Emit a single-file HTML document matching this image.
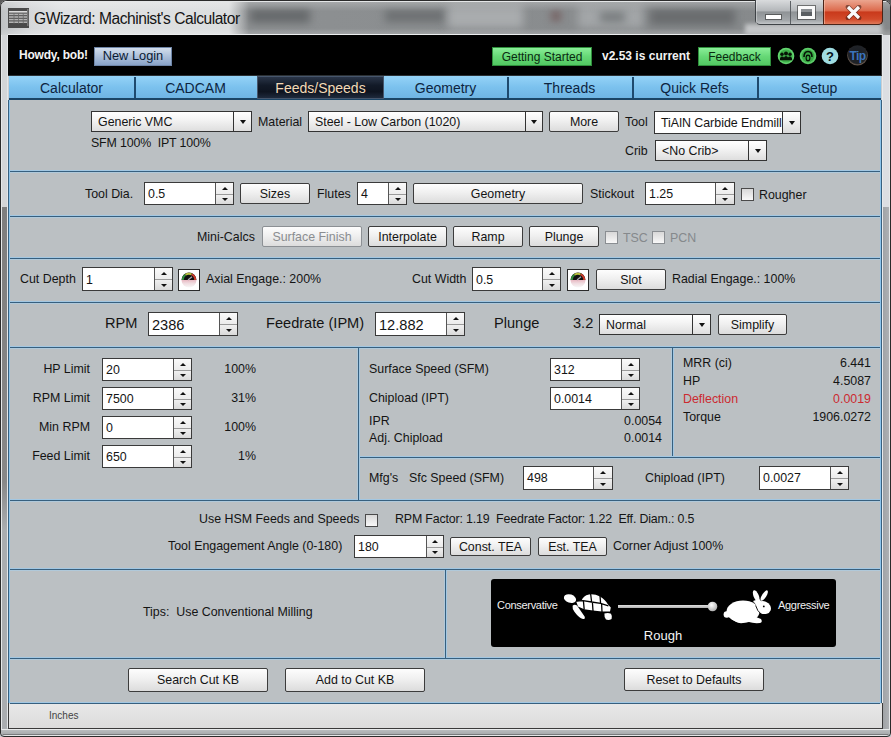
<!DOCTYPE html>
<html><head><meta charset="utf-8"><style>
html,body{margin:0;padding:0;width:891px;height:737px;overflow:hidden;background:#5a5a5a;}
body{position:relative;font-family:"Liberation Sans",sans-serif;}
body>div,body>svg{position:absolute;}
.t{white-space:pre;}
</style></head><body>
<div style="left:0px;top:0px;width:891px;height:737px;background:#c9cdd1;border-radius:7px 7px 0 0;"></div>
<div style="left:0px;top:0px;width:891px;height:737px;box-sizing:border-box;border:1px solid #2a2a2a;border-radius:7px 7px 4px 4px;"></div>
<div style="left:1px;top:1px;width:889px;height:34px;border-radius:6px 6px 0 0;background:#888b8d;overflow:hidden;"></div>
<div style="left:1px;top:1px;width:889px;height:34px;border-radius:6px 6px 0 0;background:linear-gradient(90deg,#bfc2c4 0px,#d6d8da 30px,#e0e2e3 60px,#dcdedf 228px,#8d9092 248px,#85888a 100%);"></div>
<div style="left:250px;top:9px;width:60px;height:14px;background:#66696b;filter:blur(4px);"></div>
<div style="left:385px;top:10px;width:60px;height:12px;background:#6c6f71;filter:blur(4px);"></div>
<div style="left:448px;top:6px;width:75px;height:22px;background:#a9acae;filter:blur(4px);"></div>
<div style="left:552px;top:12px;width:8px;height:8px;background:#6a4a4a;filter:blur(4px);"></div>
<div style="left:578px;top:6px;width:65px;height:22px;background:#a3a6a8;filter:blur(4px);"></div>
<div style="left:600px;top:12px;width:25px;height:10px;background:#767a7c;filter:blur(4px);"></div>
<div style="left:650px;top:9px;width:85px;height:16px;background:#696c6e;filter:blur(4px);"></div>
<div style="left:1px;top:1px;width:889px;height:34px;border-radius:6px 6px 0 0;background:linear-gradient(rgba(255,255,255,0.25),rgba(255,255,255,0) 30%,rgba(255,255,255,0) 80%,rgba(255,255,255,0.2));"></div>
<div style="left:5px;top:1px;width:881px;height:1px;background:#e4e6e7;"></div>
<div style="left:1px;top:35px;width:1px;height:694px;background:#e6e8e9;"></div>
<div style="left:2px;top:35px;width:5px;height:172px;background:#d3d5d7;"></div>
<div style="left:2px;top:207px;width:5px;height:323px;background:linear-gradient(#7e7e7e,#888 85%,#aaadb0);"></div>
<div style="left:2px;top:530px;width:5px;height:199px;background:#aaadb0;"></div>
<div style="left:7px;top:35px;width:1px;height:693px;background:#e4e6e8;"></div>
<div style="left:882px;top:35px;width:1px;height:693px;background:#e8eaec;"></div>
<div style="left:883px;top:35px;width:6px;height:172px;background:#dcdee2;"></div>
<div style="left:883px;top:207px;width:6px;height:522px;background:linear-gradient(90deg,#a0a3a6,#aeb1b4);"></div>
<div style="left:889px;top:35px;width:1px;height:694px;background:#e6e8e9;"></div>
<div style="left:8px;top:34px;width:875px;height:1px;background:#eceeef;"></div>
<svg style="left:8px;top:8px" width="21" height="20" viewBox="0 0 21 20"><rect x="0" y="0" width="21" height="20" fill="#4a4a4a"/><rect x="1" y="3" width="18" height="1.6" fill="#dcdcdc"/><rect x="1" y="5.6" width="18" height="1.6" fill="#b4b4b4"/><rect x="1" y="8.2" width="18" height="1.6" fill="#b4b4b4"/><rect x="1" y="10.8" width="18" height="1.6" fill="#b4b4b4"/><rect x="1" y="13.4" width="18" height="1.6" fill="#b4b4b4"/><rect x="5.6" y="5.6" width="0.8" height="10" fill="#6a6a6a"/><rect x="10.2" y="5.6" width="0.8" height="10" fill="#6a6a6a"/><rect x="14.799999999999999" y="5.6" width="0.8" height="10" fill="#6a6a6a"/><rect x="19" y="1" width="1.5" height="17" fill="#777"/></svg>
<div class="t" style="left:34px;top:11px;font-size:15.6px;line-height:15.6px;color:#141414;font-weight:400;letter-spacing:-0.48px;">GWizard: Machinist's Calculator</div>
<div style="left:745px;top:24px;width:137px;height:11px;background:#c3c5c7;filter:blur(2px);"></div>
<div style="left:755px;top:0px;width:128px;height:25px;box-sizing:border-box;border:1px solid #3e4246;border-top:none;border-radius:0 0 5px 5px;background:linear-gradient(#d9dbdd,#b4b7ba 45%,#8f9396 50%,#a3a7aa 85%,#c2c5c8);"></div>
<div style="left:823px;top:0px;width:60px;height:25px;box-sizing:border-box;border:1px solid #4a2418;border-top:none;border-radius:0 0 5px 0;background:linear-gradient(#eba58f,#dc6a4c 45%,#c9391b 50%,#d24a2a 80%,#e07a5a);"></div>
<div style="left:790px;top:1px;width:1px;height:23px;background:#5d6165;"></div>
<div style="left:756px;top:1px;width:1px;height:23px;background:rgba(255,255,255,0.35);"></div>
<div style="left:824px;top:1px;width:1px;height:23px;background:rgba(255,220,200,0.45);"></div>
<div style="left:766px;top:15px;width:15px;height:4px;background:#fff;box-shadow:0 0 0 1px rgba(40,40,40,0.55);"></div>
<div style="left:798px;top:6px;width:17px;height:13px;box-sizing:border-box;border:3px solid #fafafa;border-top-width:3px;background:#5a5e62;box-shadow:0 0 0 1px rgba(40,40,40,0.55);"></div>
<div style="left:801px;top:9px;width:11px;height:3px;background:#8a8e92;"></div>
<svg style="left:845px;top:5px" width="17" height="15" viewBox="0 0 17 15"><path d="M3 2 L14 13 M14 2 L3 13" stroke="#3a1a12" stroke-width="4.6" fill="none" stroke-linecap="round" opacity="0.55"/><path d="M3 2 L14 13 M14 2 L3 13" stroke="#fafafa" stroke-width="3.2" fill="none" stroke-linecap="butt"/></svg>
<div style="left:8px;top:35px;width:873px;height:41px;background:#000;"></div>
<div style="left:881px;top:35px;width:1px;height:41px;background:#3a3c3e;"></div>
<div class="t" style="left:19px;top:49px;font-size:12px;line-height:12px;color:#f4f4f4;font-weight:700;letter-spacing:-0.2px;">Howdy, bob!</div>
<div style="left:94px;top:47px;width:78px;height:19px;box-sizing:border-box;border:1px solid #6f86a8;background:linear-gradient(#d3deec,#a9bdd8 55%,#89a3c8);"></div>
<div class="t" style="left:-67px;width:400px;text-align:center;top:50px;font-size:12.8px;line-height:12.8px;color:#0a1a33;font-weight:400;">New Login</div>
<div style="left:492px;top:47px;width:100px;height:19px;box-sizing:border-box;border:1px solid #2f8f3c;background:linear-gradient(#8aee98,#66d876 50%,#52c862);"></div>
<div class="t" style="left:342px;width:400px;text-align:center;top:51px;font-size:12px;line-height:12px;color:#0a2a10;font-weight:400;">Getting Started</div>
<div class="t" style="left:602px;top:50px;font-size:12px;line-height:12px;color:#f2f2f2;font-weight:700;">v2.53 is current</div>
<div style="left:698px;top:47px;width:73px;height:19px;box-sizing:border-box;border:1px solid #2f8f3c;background:linear-gradient(#8aee98,#66d876 50%,#52c862);"></div>
<div class="t" style="left:534.5px;width:400px;text-align:center;top:51px;font-size:12px;line-height:12px;color:#0a2a10;font-weight:400;">Feedback</div>
<svg style="left:777px;top:47px" width="18" height="18" viewBox="0 0 18 18"><circle cx="9" cy="9" r="8.3" fill="#62d46e"/><circle cx="9" cy="9" r="6.6" fill="#3fae4a"/><circle cx="5" cy="7.2" r="1.7" fill="#061206"/><circle cx="9" cy="6.4" r="2" fill="#061206"/><circle cx="13" cy="7.2" r="1.7" fill="#061206"/><path d="M2.8 13.2 Q3 9.6 5 9.6 Q6.4 9.6 7 10.6 Q7.6 9 9 9 Q10.4 9 11 10.6 Q11.6 9.6 13 9.6 Q15 9.6 15.2 13.2 Z" fill="#061206"/></svg>
<svg style="left:799px;top:47px" width="18" height="18" viewBox="0 0 18 18"><circle cx="9" cy="9" r="8.3" fill="#5ccc68"/><circle cx="9" cy="9" r="6.4" fill="#3aa845"/><path d="M5 10 Q5 4.5 9 4.5 Q13 4.5 13 10" stroke="#061206" stroke-width="1.6" fill="none"/><rect x="6.6" y="7.5" width="4.8" height="7" rx="2.4" fill="#061206"/><rect x="7.8" y="9" width="2.4" height="4" rx="1.2" fill="#3aa845"/></svg>
<svg style="left:821px;top:47px" width="18" height="18" viewBox="0 0 18 18"><circle cx="9" cy="9" r="8.3" fill="#9fdde2"/><text x="9" y="13.8" font-family="Liberation Sans" font-weight="700" font-size="13" text-anchor="middle" fill="#06121a">?</text></svg>
<svg style="left:847px;top:45px" width="22" height="22" viewBox="0 0 22 22"><defs><radialGradient id="tg" cx="0.5" cy="0.45" r="0.55"><stop offset="0" stop-color="#1a1d22"/><stop offset="0.8" stop-color="#202328"/><stop offset="0.92" stop-color="#6a5a50"/><stop offset="1" stop-color="#2a2624"/></radialGradient></defs><circle cx="10.5" cy="10.5" r="10.3" fill="url(#tg)"/><text x="10.5" y="15.2" font-family="Liberation Sans" font-weight="700" font-size="12" text-anchor="middle" fill="#3b74bd" letter-spacing="-0.6">Tip</text></svg>
<div style="left:8px;top:75px;width:874px;height:1px;background:#2a2f33;"></div>
<div style="left:9px;top:76px;width:872px;height:24px;background:linear-gradient(#95d3f7,#7cc2ee 45%,#6cb2e2);"></div>
<div style="left:9px;top:98px;width:872px;height:2px;background:#1b4566;"></div>
<div class="t" style="left:-128.5px;width:400px;text-align:center;top:81px;font-size:14px;line-height:14px;color:#0d2440;font-weight:400;">Calculator</div>
<div style="left:134px;top:77px;width:2px;height:21px;background:#1e4a6e;"></div>
<div class="t" style="left:-4.5px;width:400px;text-align:center;top:81px;font-size:14px;line-height:14px;color:#0d2440;font-weight:400;">CADCAM</div>
<div style="left:257px;top:76px;width:127px;height:23px;box-sizing:border-box;border:1px solid #46566c;background:linear-gradient(#2a3548,#121a28 40%,#0e1420 70%,#1e2a3c);"></div>
<div class="t" style="left:120.5px;width:400px;text-align:center;top:81px;font-size:14px;line-height:14px;color:#f3d9b6;font-weight:400;">Feeds/Speeds</div>
<div class="t" style="left:245.5px;width:400px;text-align:center;top:81px;font-size:14px;line-height:14px;color:#0d2440;font-weight:400;">Geometry</div>
<div style="left:507px;top:77px;width:2px;height:21px;background:#1e4a6e;"></div>
<div class="t" style="left:369.5px;width:400px;text-align:center;top:81px;font-size:14px;line-height:14px;color:#0d2440;font-weight:400;">Threads</div>
<div style="left:632px;top:77px;width:2px;height:21px;background:#1e4a6e;"></div>
<div class="t" style="left:494.5px;width:400px;text-align:center;top:81px;font-size:14px;line-height:14px;color:#0d2440;font-weight:400;">Quick Refs</div>
<div style="left:757px;top:77px;width:2px;height:21px;background:#1e4a6e;"></div>
<div class="t" style="left:619.0px;width:400px;text-align:center;top:81px;font-size:14px;line-height:14px;color:#0d2440;font-weight:400;">Setup</div>
<div style="left:9px;top:100px;width:872px;height:603px;background:#bbc0c3;"></div>
<div style="left:8px;top:100px;width:1px;height:603px;background:#37607f;"></div>
<div style="left:9px;top:100px;width:1px;height:603px;background:#8cc3ea;"></div>
<div style="left:880px;top:100px;width:1px;height:603px;background:#8cc3ea;"></div>
<div style="left:881px;top:100px;width:1px;height:603px;background:#37607f;"></div>
<div style="left:10px;top:170px;width:870px;height:1px;background:#a2c7e2;"></div>
<div style="left:10px;top:171px;width:870px;height:1px;background:#37607f;"></div>
<div style="left:10px;top:172px;width:870px;height:1px;background:#b0c9da;"></div>
<div style="left:10px;top:215px;width:870px;height:1px;background:#a2c7e2;"></div>
<div style="left:10px;top:216px;width:870px;height:1px;background:#37607f;"></div>
<div style="left:10px;top:217px;width:870px;height:1px;background:#b0c9da;"></div>
<div style="left:10px;top:257px;width:870px;height:1px;background:#a2c7e2;"></div>
<div style="left:10px;top:258px;width:870px;height:1px;background:#37607f;"></div>
<div style="left:10px;top:259px;width:870px;height:1px;background:#b0c9da;"></div>
<div style="left:10px;top:301px;width:870px;height:1px;background:#a2c7e2;"></div>
<div style="left:10px;top:302px;width:870px;height:1px;background:#37607f;"></div>
<div style="left:10px;top:303px;width:870px;height:1px;background:#b0c9da;"></div>
<div style="left:10px;top:346px;width:870px;height:1px;background:#a2c7e2;"></div>
<div style="left:10px;top:347px;width:870px;height:1px;background:#37607f;"></div>
<div style="left:10px;top:348px;width:870px;height:1px;background:#b0c9da;"></div>
<div style="left:10px;top:499px;width:870px;height:1px;background:#a2c7e2;"></div>
<div style="left:10px;top:500px;width:870px;height:1px;background:#37607f;"></div>
<div style="left:10px;top:501px;width:870px;height:1px;background:#b0c9da;"></div>
<div style="left:10px;top:568px;width:870px;height:1px;background:#a2c7e2;"></div>
<div style="left:10px;top:569px;width:870px;height:1px;background:#37607f;"></div>
<div style="left:10px;top:570px;width:870px;height:1px;background:#b0c9da;"></div>
<div style="left:10px;top:657px;width:870px;height:1px;background:#a2c7e2;"></div>
<div style="left:10px;top:658px;width:870px;height:1px;background:#37607f;"></div>
<div style="left:10px;top:659px;width:870px;height:1px;background:#b0c9da;"></div>
<div style="left:10px;top:702px;width:870px;height:1px;background:#a2c7e2;"></div>
<div style="left:10px;top:703px;width:870px;height:1px;background:#37607f;"></div>
<div style="left:10px;top:704px;width:870px;height:1px;background:#b0c9da;"></div>
<div style="left:357px;top:348px;width:1px;height:152px;background:#b0c9da;"></div>
<div style="left:358px;top:348px;width:1px;height:152px;background:#37607f;"></div>
<div style="left:359px;top:348px;width:1px;height:152px;background:#a2c7e2;"></div>
<div style="left:671px;top:348px;width:1px;height:108px;background:#b0c9da;"></div>
<div style="left:672px;top:348px;width:1px;height:108px;background:#37607f;"></div>
<div style="left:673px;top:348px;width:1px;height:108px;background:#a2c7e2;"></div>
<div style="left:360px;top:456px;width:520px;height:1px;background:#a2c7e2;"></div>
<div style="left:360px;top:457px;width:520px;height:1px;background:#37607f;"></div>
<div style="left:360px;top:458px;width:520px;height:1px;background:#b0c9da;"></div>
<div style="left:444px;top:570px;width:1px;height:88px;background:#b0c9da;"></div>
<div style="left:445px;top:570px;width:1px;height:88px;background:#37607f;"></div>
<div style="left:446px;top:570px;width:1px;height:88px;background:#a2c7e2;"></div>
<div style="left:91px;top:111px;width:161px;height:21px;box-sizing:border-box;border:1px solid #333;background:linear-gradient(#ffffff,#f4f4f4 40%,#dedede);"></div>
<div style="left:233px;top:112px;width:1px;height:19px;background:#333;"></div>
<div style="left:239.5px;top:119.5px;width:0;height:0;border-left:3.5px solid transparent;border-right:3.5px solid transparent;border-top:4px solid #111;"></div>
<div class="t" style="left:98px;top:116px;font-size:12.4px;line-height:12.4px;color:#141414;font-weight:400;">Generic VMC</div>
<div class="t" style="left:258px;top:116px;font-size:12.4px;line-height:12.4px;color:#141414;font-weight:400;">Material</div>
<div style="left:308px;top:111px;width:235px;height:21px;box-sizing:border-box;border:1px solid #333;background:linear-gradient(#ffffff,#f4f4f4 40%,#dedede);"></div>
<div style="left:525px;top:112px;width:1px;height:19px;background:#333;"></div>
<div style="left:531.0px;top:119.5px;width:0;height:0;border-left:3.5px solid transparent;border-right:3.5px solid transparent;border-top:4px solid #111;"></div>
<div class="t" style="left:315px;top:116px;font-size:12.4px;line-height:12.4px;color:#141414;font-weight:400;">Steel - Low Carbon (1020)</div>
<div style="left:549px;top:111px;width:70px;height:21px;box-sizing:border-box;border:1px solid #3c3c3c;border-radius:2px;background:linear-gradient(#fdfdfd,#f0f0f0 45%,#dcdcdc 100%);"></div>
<div class="t" style="left:384.0px;width:400px;text-align:center;top:116px;font-size:12.4px;line-height:12.4px;color:#141414;font-weight:400;">More</div>
<div class="t" style="left:625px;top:116px;font-size:12.4px;line-height:12.4px;color:#141414;font-weight:400;">Tool</div>
<div style="left:654px;top:111px;width:147px;height:23px;box-sizing:border-box;border:1px solid #333;background:#fff;"></div>
<div style="left:782px;top:111px;width:19px;height:23px;box-sizing:border-box;border:1px solid #333;background:linear-gradient(#ffffff,#f2f2f2 40%,#dcdcdc);"></div>
<div style="left:788.5px;top:120.5px;width:0;height:0;border-left:3.5px solid transparent;border-right:3.5px solid transparent;border-top:4px solid #111;"></div>
<div class="t" style="left:661px;top:117px;font-size:12.4px;line-height:12.4px;color:#141414;font-weight:400;">TiAlN Carbide Endmill</div>
<div class="t" style="left:91px;top:137px;font-size:12.4px;line-height:12.4px;color:#141414;font-weight:400;letter-spacing:-0.15px;">SFM 100%&nbsp;&nbsp;IPT 100%</div>
<div class="t" style="left:625px;top:145px;font-size:12.4px;line-height:12.4px;color:#141414;font-weight:400;">Crib</div>
<div style="left:655px;top:140px;width:112px;height:21px;box-sizing:border-box;border:1px solid #333;background:linear-gradient(#ffffff,#f4f4f4 40%,#dedede);"></div>
<div style="left:748px;top:141px;width:1px;height:19px;background:#333;"></div>
<div style="left:754.5px;top:148.5px;width:0;height:0;border-left:3.5px solid transparent;border-right:3.5px solid transparent;border-top:4px solid #111;"></div>
<div class="t" style="left:662px;top:145px;font-size:12.4px;line-height:12.4px;color:#141414;font-weight:400;">&lt;No Crib&gt;</div>
<div class="t" style="left:85px;top:188px;font-size:12.4px;line-height:12.4px;color:#141414;font-weight:400;">Tool Dia.</div>
<div style="left:144px;top:182px;width:90px;height:23px;box-sizing:border-box;border:1px solid #3a3a3a;background:#fff;"></div>
<div style="left:215px;top:183px;width:1px;height:21px;background:#555;"></div>
<div style="left:216px;top:183px;width:17px;height:10.5px;background:linear-gradient(#fafafa,#ececec);"></div>
<div style="left:216px;top:193.5px;width:17px;height:1px;background:#9a9a9a;"></div>
<div style="left:216px;top:194.5px;width:17px;height:9.5px;background:linear-gradient(#f0f0f0,#dadada);"></div>
<div style="left:221.5px;top:186.75px;width:0;height:0;border-left:3.0px solid transparent;border-right:3.0px solid transparent;border-bottom:3px solid #111;"></div>
<div style="left:221.5px;top:197.75px;width:0;height:0;border-left:3.0px solid transparent;border-right:3.0px solid transparent;border-top:3px solid #111;"></div>
<div class="t" style="left:148px;top:188px;font-size:12.4px;line-height:12.4px;color:#141414;font-weight:400;">0.5</div>
<div style="left:240px;top:183px;width:70px;height:21px;box-sizing:border-box;border:1px solid #3c3c3c;border-radius:2px;background:linear-gradient(#fdfdfd,#f0f0f0 45%,#dcdcdc 100%);"></div>
<div class="t" style="left:75.0px;width:400px;text-align:center;top:188px;font-size:12.4px;line-height:12.4px;color:#141414;font-weight:400;">Sizes</div>
<div class="t" style="left:317px;top:188px;font-size:12.4px;line-height:12.4px;color:#141414;font-weight:400;">Flutes</div>
<div style="left:357px;top:182px;width:50px;height:23px;box-sizing:border-box;border:1px solid #3a3a3a;background:#fff;"></div>
<div style="left:388px;top:183px;width:1px;height:21px;background:#555;"></div>
<div style="left:389px;top:183px;width:17px;height:10.5px;background:linear-gradient(#fafafa,#ececec);"></div>
<div style="left:389px;top:193.5px;width:17px;height:1px;background:#9a9a9a;"></div>
<div style="left:389px;top:194.5px;width:17px;height:9.5px;background:linear-gradient(#f0f0f0,#dadada);"></div>
<div style="left:394.5px;top:186.75px;width:0;height:0;border-left:3.0px solid transparent;border-right:3.0px solid transparent;border-bottom:3px solid #111;"></div>
<div style="left:394.5px;top:197.75px;width:0;height:0;border-left:3.0px solid transparent;border-right:3.0px solid transparent;border-top:3px solid #111;"></div>
<div class="t" style="left:361px;top:188px;font-size:12.4px;line-height:12.4px;color:#141414;font-weight:400;">4</div>
<div style="left:413px;top:183px;width:170px;height:21px;box-sizing:border-box;border:1px solid #3c3c3c;border-radius:2px;background:linear-gradient(#fdfdfd,#f0f0f0 45%,#dcdcdc 100%);"></div>
<div class="t" style="left:298.0px;width:400px;text-align:center;top:188px;font-size:12.4px;line-height:12.4px;color:#141414;font-weight:400;">Geometry</div>
<div class="t" style="left:590px;top:188px;font-size:12.4px;line-height:12.4px;color:#141414;font-weight:400;">Stickout</div>
<div style="left:645px;top:182px;width:90px;height:23px;box-sizing:border-box;border:1px solid #3a3a3a;background:#fff;"></div>
<div style="left:715px;top:183px;width:1px;height:21px;background:#555;"></div>
<div style="left:716px;top:183px;width:18px;height:10.5px;background:linear-gradient(#fafafa,#ececec);"></div>
<div style="left:716px;top:193.5px;width:18px;height:1px;background:#9a9a9a;"></div>
<div style="left:716px;top:194.5px;width:18px;height:9.5px;background:linear-gradient(#f0f0f0,#dadada);"></div>
<div style="left:722.0px;top:186.75px;width:0;height:0;border-left:3.0px solid transparent;border-right:3.0px solid transparent;border-bottom:3px solid #111;"></div>
<div style="left:722.0px;top:197.75px;width:0;height:0;border-left:3.0px solid transparent;border-right:3.0px solid transparent;border-top:3px solid #111;"></div>
<div class="t" style="left:649px;top:188px;font-size:12.4px;line-height:12.4px;color:#141414;font-weight:400;">1.25</div>
<div style="left:741px;top:188px;width:13px;height:13px;box-sizing:border-box;border:1px solid #4a4a4a;background:linear-gradient(#d8d8d8,#f8f8f8);"></div>
<div class="t" style="left:759px;top:189px;font-size:12.4px;line-height:12.4px;color:#141414;font-weight:400;">Rougher</div>
<div class="t" style="left:197px;top:231px;font-size:12.4px;line-height:12.4px;color:#141414;font-weight:400;">Mini-Calcs</div>
<div style="left:262px;top:226px;width:100px;height:21px;box-sizing:border-box;border:1px solid #8c9094;border-radius:2px;background:linear-gradient(#fdfdfd,#f0f0f0 45%,#dcdcdc 100%);"></div>
<div class="t" style="left:112.0px;width:400px;text-align:center;top:231px;font-size:12.4px;line-height:12.4px;color:#8a8d90;font-weight:400;">Surface Finish</div>
<div style="left:368px;top:226px;width:79px;height:21px;box-sizing:border-box;border:1px solid #3c3c3c;border-radius:2px;background:linear-gradient(#fdfdfd,#f0f0f0 45%,#dcdcdc 100%);"></div>
<div class="t" style="left:207.5px;width:400px;text-align:center;top:231px;font-size:12.4px;line-height:12.4px;color:#141414;font-weight:400;">Interpolate</div>
<div style="left:453px;top:226px;width:70px;height:21px;box-sizing:border-box;border:1px solid #3c3c3c;border-radius:2px;background:linear-gradient(#fdfdfd,#f0f0f0 45%,#dcdcdc 100%);"></div>
<div class="t" style="left:288.0px;width:400px;text-align:center;top:231px;font-size:12.4px;line-height:12.4px;color:#141414;font-weight:400;">Ramp</div>
<div style="left:529px;top:226px;width:70px;height:21px;box-sizing:border-box;border:1px solid #3c3c3c;border-radius:2px;background:linear-gradient(#fdfdfd,#f0f0f0 45%,#dcdcdc 100%);"></div>
<div class="t" style="left:364.0px;width:400px;text-align:center;top:231px;font-size:12.4px;line-height:12.4px;color:#141414;font-weight:400;">Plunge</div>
<div style="left:605px;top:231px;width:13px;height:13px;box-sizing:border-box;border:1px solid #8a8e92;background:linear-gradient(#d8d8d8,#f8f8f8);"></div>
<div class="t" style="left:623px;top:232px;font-size:12.4px;line-height:12.4px;color:#85898c;font-weight:400;">TSC</div>
<div style="left:652px;top:231px;width:13px;height:13px;box-sizing:border-box;border:1px solid #8a8e92;background:linear-gradient(#d8d8d8,#f8f8f8);"></div>
<div class="t" style="left:670px;top:232px;font-size:12.4px;line-height:12.4px;color:#85898c;font-weight:400;">PCN</div>
<div class="t" style="left:20px;top:273px;font-size:12.4px;line-height:12.4px;color:#141414;font-weight:400;">Cut Depth</div>
<div style="left:82px;top:267px;width:91px;height:24px;box-sizing:border-box;border:1px solid #3a3a3a;background:#fff;"></div>
<div style="left:154px;top:268px;width:1px;height:22px;background:#555;"></div>
<div style="left:155px;top:268px;width:17px;height:11.0px;background:linear-gradient(#fafafa,#ececec);"></div>
<div style="left:155px;top:279.0px;width:17px;height:1px;background:#9a9a9a;"></div>
<div style="left:155px;top:280.0px;width:17px;height:10.0px;background:linear-gradient(#f0f0f0,#dadada);"></div>
<div style="left:160.5px;top:272.0px;width:0;height:0;border-left:3.0px solid transparent;border-right:3.0px solid transparent;border-bottom:3px solid #111;"></div>
<div style="left:160.5px;top:283.5px;width:0;height:0;border-left:3.0px solid transparent;border-right:3.0px solid transparent;border-top:3px solid #111;"></div>
<div class="t" style="left:86px;top:274px;font-size:12.4px;line-height:12.4px;color:#141414;font-weight:400;">1</div>
<div style="left:178px;top:269px;width:22px;height:22px;box-sizing:border-box;border:1px solid #2a2a2a;background:#fff;"></div>
<svg style="left:181px;top:272px" width="16" height="16" viewBox="0 0 16 16"><defs><linearGradient id="gb178" x1="0" y1="0" x2="0" y2="1"><stop offset="0" stop-color="#e8b8c2"/><stop offset="0.45" stop-color="#f0dce0"/><stop offset="1" stop-color="#f8f8f8"/></linearGradient></defs><path d="M0.5 8 A7.5 7.5 0 0 0 15.5 8 Z" fill="url(#gb178)"/><path d="M0.5 8 A7.5 7.5 0 0 1 15.5 8 Z" fill="#111"/><path d="M0.8 8 A7.2 7.2 0 0 1 4 2 L5 3.6 A5.2 5.2 0 0 0 2.8 8 Z" fill="#2e8a3a"/><path d="M4 2 A7.2 7.2 0 0 1 11 1.5 L10.3 3.3 A5.2 5.2 0 0 0 5 3.6 Z" fill="#b8c040"/><path d="M11 1.5 A7.2 7.2 0 0 1 15.2 8 L13.2 8 A5.2 5.2 0 0 0 10.3 3.3 Z" fill="#c83828"/><path d="M7 8 L11 4.8" stroke="#a8a8b0" stroke-width="1.3"/></svg>
<div class="t" style="left:206px;top:273px;font-size:12.4px;line-height:12.4px;color:#141414;font-weight:400;">Axial Engage.: 200%</div>
<div class="t" style="left:412px;top:273px;font-size:12.4px;line-height:12.4px;color:#141414;font-weight:400;">Cut Width</div>
<div style="left:472px;top:267px;width:89px;height:24px;box-sizing:border-box;border:1px solid #3a3a3a;background:#fff;"></div>
<div style="left:542px;top:268px;width:1px;height:22px;background:#555;"></div>
<div style="left:543px;top:268px;width:17px;height:11.0px;background:linear-gradient(#fafafa,#ececec);"></div>
<div style="left:543px;top:279.0px;width:17px;height:1px;background:#9a9a9a;"></div>
<div style="left:543px;top:280.0px;width:17px;height:10.0px;background:linear-gradient(#f0f0f0,#dadada);"></div>
<div style="left:548.5px;top:272.0px;width:0;height:0;border-left:3.0px solid transparent;border-right:3.0px solid transparent;border-bottom:3px solid #111;"></div>
<div style="left:548.5px;top:283.5px;width:0;height:0;border-left:3.0px solid transparent;border-right:3.0px solid transparent;border-top:3px solid #111;"></div>
<div class="t" style="left:476px;top:274px;font-size:12.4px;line-height:12.4px;color:#141414;font-weight:400;">0.5</div>
<div style="left:567px;top:269px;width:22px;height:22px;box-sizing:border-box;border:1px solid #2a2a2a;background:#fff;"></div>
<svg style="left:570px;top:272px" width="16" height="16" viewBox="0 0 16 16"><defs><linearGradient id="gb567" x1="0" y1="0" x2="0" y2="1"><stop offset="0" stop-color="#e8b8c2"/><stop offset="0.45" stop-color="#f0dce0"/><stop offset="1" stop-color="#f8f8f8"/></linearGradient></defs><path d="M0.5 8 A7.5 7.5 0 0 0 15.5 8 Z" fill="url(#gb567)"/><path d="M0.5 8 A7.5 7.5 0 0 1 15.5 8 Z" fill="#111"/><path d="M0.8 8 A7.2 7.2 0 0 1 4 2 L5 3.6 A5.2 5.2 0 0 0 2.8 8 Z" fill="#2e8a3a"/><path d="M4 2 A7.2 7.2 0 0 1 11 1.5 L10.3 3.3 A5.2 5.2 0 0 0 5 3.6 Z" fill="#b8c040"/><path d="M11 1.5 A7.2 7.2 0 0 1 15.2 8 L13.2 8 A5.2 5.2 0 0 0 10.3 3.3 Z" fill="#c83828"/><path d="M7 8 L11 4.8" stroke="#a8a8b0" stroke-width="1.3"/></svg>
<div style="left:596px;top:269px;width:70px;height:21px;box-sizing:border-box;border:1px solid #3c3c3c;border-radius:2px;background:linear-gradient(#fdfdfd,#f0f0f0 45%,#dcdcdc 100%);"></div>
<div class="t" style="left:431.0px;width:400px;text-align:center;top:274px;font-size:12.4px;line-height:12.4px;color:#141414;font-weight:400;">Slot</div>
<div class="t" style="left:672px;top:273px;font-size:12.4px;line-height:12.4px;color:#141414;font-weight:400;">Radial Engage.: 100%</div>
<div class="t" style="left:105px;top:316px;font-size:14.6px;line-height:14.6px;color:#141414;font-weight:400;">RPM</div>
<div style="left:148px;top:312px;width:90px;height:24px;box-sizing:border-box;border:1px solid #3a3a3a;background:#fff;"></div>
<div style="left:219px;top:313px;width:1px;height:22px;background:#555;"></div>
<div style="left:220px;top:313px;width:17px;height:11.0px;background:linear-gradient(#fafafa,#ececec);"></div>
<div style="left:220px;top:324.0px;width:17px;height:1px;background:#9a9a9a;"></div>
<div style="left:220px;top:325.0px;width:17px;height:10.0px;background:linear-gradient(#f0f0f0,#dadada);"></div>
<div style="left:225.5px;top:317.0px;width:0;height:0;border-left:3.0px solid transparent;border-right:3.0px solid transparent;border-bottom:3px solid #111;"></div>
<div style="left:225.5px;top:328.5px;width:0;height:0;border-left:3.0px solid transparent;border-right:3.0px solid transparent;border-top:3px solid #111;"></div>
<div class="t" style="left:152px;top:318px;font-size:14.6px;line-height:14.6px;color:#141414;font-weight:400;">2386</div>
<div class="t" style="left:266px;top:316px;font-size:14.6px;line-height:14.6px;color:#141414;font-weight:400;">Feedrate (IPM)</div>
<div style="left:375px;top:312px;width:90px;height:24px;box-sizing:border-box;border:1px solid #3a3a3a;background:#fff;"></div>
<div style="left:446px;top:313px;width:1px;height:22px;background:#555;"></div>
<div style="left:447px;top:313px;width:17px;height:11.0px;background:linear-gradient(#fafafa,#ececec);"></div>
<div style="left:447px;top:324.0px;width:17px;height:1px;background:#9a9a9a;"></div>
<div style="left:447px;top:325.0px;width:17px;height:10.0px;background:linear-gradient(#f0f0f0,#dadada);"></div>
<div style="left:452.5px;top:317.0px;width:0;height:0;border-left:3.0px solid transparent;border-right:3.0px solid transparent;border-bottom:3px solid #111;"></div>
<div style="left:452.5px;top:328.5px;width:0;height:0;border-left:3.0px solid transparent;border-right:3.0px solid transparent;border-top:3px solid #111;"></div>
<div class="t" style="left:379px;top:318px;font-size:14.6px;line-height:14.6px;color:#141414;font-weight:400;">12.882</div>
<div class="t" style="left:494px;top:316px;font-size:14.6px;line-height:14.6px;color:#141414;font-weight:400;">Plunge</div>
<div class="t" style="left:573px;top:316px;font-size:14.6px;line-height:14.6px;color:#141414;font-weight:400;">3.2</div>
<div style="left:599px;top:314px;width:112px;height:21px;box-sizing:border-box;border:1px solid #333;background:linear-gradient(#ffffff,#f4f4f4 40%,#dedede);"></div>
<div style="left:692px;top:315px;width:1px;height:19px;background:#333;"></div>
<div style="left:698.5px;top:322.5px;width:0;height:0;border-left:3.5px solid transparent;border-right:3.5px solid transparent;border-top:4px solid #111;"></div>
<div class="t" style="left:606px;top:319px;font-size:12.4px;line-height:12.4px;color:#141414;font-weight:400;">Normal</div>
<div style="left:718px;top:314px;width:69px;height:21px;box-sizing:border-box;border:1px solid #3c3c3c;border-radius:2px;background:linear-gradient(#fdfdfd,#f0f0f0 45%,#dcdcdc 100%);"></div>
<div class="t" style="left:552.5px;width:400px;text-align:center;top:319px;font-size:12.4px;line-height:12.4px;color:#141414;font-weight:400;">Simplify</div>
<div class="t" style="right:801px;top:363px;font-size:12.4px;line-height:12.4px;color:#141414;font-weight:400;">HP Limit</div>
<div style="left:102px;top:358px;width:90px;height:23px;box-sizing:border-box;border:1px solid #3a3a3a;background:#fff;"></div>
<div style="left:173px;top:359px;width:1px;height:21px;background:#555;"></div>
<div style="left:174px;top:359px;width:17px;height:10.5px;background:linear-gradient(#fafafa,#ececec);"></div>
<div style="left:174px;top:369.5px;width:17px;height:1px;background:#9a9a9a;"></div>
<div style="left:174px;top:370.5px;width:17px;height:9.5px;background:linear-gradient(#f0f0f0,#dadada);"></div>
<div style="left:179.5px;top:362.75px;width:0;height:0;border-left:3.0px solid transparent;border-right:3.0px solid transparent;border-bottom:3px solid #111;"></div>
<div style="left:179.5px;top:373.75px;width:0;height:0;border-left:3.0px solid transparent;border-right:3.0px solid transparent;border-top:3px solid #111;"></div>
<div class="t" style="left:106px;top:364px;font-size:12.4px;line-height:12.4px;color:#141414;font-weight:400;">20</div>
<div class="t" style="right:635px;top:363px;font-size:12.4px;line-height:12.4px;color:#141414;font-weight:400;">100%</div>
<div class="t" style="right:801px;top:392px;font-size:12.4px;line-height:12.4px;color:#141414;font-weight:400;">RPM Limit</div>
<div style="left:102px;top:387px;width:90px;height:23px;box-sizing:border-box;border:1px solid #3a3a3a;background:#fff;"></div>
<div style="left:173px;top:388px;width:1px;height:21px;background:#555;"></div>
<div style="left:174px;top:388px;width:17px;height:10.5px;background:linear-gradient(#fafafa,#ececec);"></div>
<div style="left:174px;top:398.5px;width:17px;height:1px;background:#9a9a9a;"></div>
<div style="left:174px;top:399.5px;width:17px;height:9.5px;background:linear-gradient(#f0f0f0,#dadada);"></div>
<div style="left:179.5px;top:391.75px;width:0;height:0;border-left:3.0px solid transparent;border-right:3.0px solid transparent;border-bottom:3px solid #111;"></div>
<div style="left:179.5px;top:402.75px;width:0;height:0;border-left:3.0px solid transparent;border-right:3.0px solid transparent;border-top:3px solid #111;"></div>
<div class="t" style="left:106px;top:393px;font-size:12.4px;line-height:12.4px;color:#141414;font-weight:400;">7500</div>
<div class="t" style="right:635px;top:392px;font-size:12.4px;line-height:12.4px;color:#141414;font-weight:400;">31%</div>
<div class="t" style="right:801px;top:421px;font-size:12.4px;line-height:12.4px;color:#141414;font-weight:400;">Min RPM</div>
<div style="left:102px;top:416px;width:90px;height:23px;box-sizing:border-box;border:1px solid #3a3a3a;background:#fff;"></div>
<div style="left:173px;top:417px;width:1px;height:21px;background:#555;"></div>
<div style="left:174px;top:417px;width:17px;height:10.5px;background:linear-gradient(#fafafa,#ececec);"></div>
<div style="left:174px;top:427.5px;width:17px;height:1px;background:#9a9a9a;"></div>
<div style="left:174px;top:428.5px;width:17px;height:9.5px;background:linear-gradient(#f0f0f0,#dadada);"></div>
<div style="left:179.5px;top:420.75px;width:0;height:0;border-left:3.0px solid transparent;border-right:3.0px solid transparent;border-bottom:3px solid #111;"></div>
<div style="left:179.5px;top:431.75px;width:0;height:0;border-left:3.0px solid transparent;border-right:3.0px solid transparent;border-top:3px solid #111;"></div>
<div class="t" style="left:106px;top:422px;font-size:12.4px;line-height:12.4px;color:#141414;font-weight:400;">0</div>
<div class="t" style="right:635px;top:421px;font-size:12.4px;line-height:12.4px;color:#141414;font-weight:400;">100%</div>
<div class="t" style="right:801px;top:450px;font-size:12.4px;line-height:12.4px;color:#141414;font-weight:400;">Feed Limit</div>
<div style="left:102px;top:445px;width:90px;height:23px;box-sizing:border-box;border:1px solid #3a3a3a;background:#fff;"></div>
<div style="left:173px;top:446px;width:1px;height:21px;background:#555;"></div>
<div style="left:174px;top:446px;width:17px;height:10.5px;background:linear-gradient(#fafafa,#ececec);"></div>
<div style="left:174px;top:456.5px;width:17px;height:1px;background:#9a9a9a;"></div>
<div style="left:174px;top:457.5px;width:17px;height:9.5px;background:linear-gradient(#f0f0f0,#dadada);"></div>
<div style="left:179.5px;top:449.75px;width:0;height:0;border-left:3.0px solid transparent;border-right:3.0px solid transparent;border-bottom:3px solid #111;"></div>
<div style="left:179.5px;top:460.75px;width:0;height:0;border-left:3.0px solid transparent;border-right:3.0px solid transparent;border-top:3px solid #111;"></div>
<div class="t" style="left:106px;top:451px;font-size:12.4px;line-height:12.4px;color:#141414;font-weight:400;">650</div>
<div class="t" style="right:635px;top:450px;font-size:12.4px;line-height:12.4px;color:#141414;font-weight:400;">1%</div>
<div class="t" style="left:369px;top:363px;font-size:12.4px;line-height:12.4px;color:#141414;font-weight:400;">Surface Speed (SFM)</div>
<div style="left:550px;top:358px;width:90px;height:23px;box-sizing:border-box;border:1px solid #3a3a3a;background:#fff;"></div>
<div style="left:621px;top:359px;width:1px;height:21px;background:#555;"></div>
<div style="left:622px;top:359px;width:17px;height:10.5px;background:linear-gradient(#fafafa,#ececec);"></div>
<div style="left:622px;top:369.5px;width:17px;height:1px;background:#9a9a9a;"></div>
<div style="left:622px;top:370.5px;width:17px;height:9.5px;background:linear-gradient(#f0f0f0,#dadada);"></div>
<div style="left:627.5px;top:362.75px;width:0;height:0;border-left:3.0px solid transparent;border-right:3.0px solid transparent;border-bottom:3px solid #111;"></div>
<div style="left:627.5px;top:373.75px;width:0;height:0;border-left:3.0px solid transparent;border-right:3.0px solid transparent;border-top:3px solid #111;"></div>
<div class="t" style="left:554px;top:364px;font-size:12.4px;line-height:12.4px;color:#141414;font-weight:400;">312</div>
<div class="t" style="left:369px;top:392px;font-size:12.4px;line-height:12.4px;color:#141414;font-weight:400;">Chipload (IPT)</div>
<div style="left:550px;top:387px;width:90px;height:23px;box-sizing:border-box;border:1px solid #3a3a3a;background:#fff;"></div>
<div style="left:621px;top:388px;width:1px;height:21px;background:#555;"></div>
<div style="left:622px;top:388px;width:17px;height:10.5px;background:linear-gradient(#fafafa,#ececec);"></div>
<div style="left:622px;top:398.5px;width:17px;height:1px;background:#9a9a9a;"></div>
<div style="left:622px;top:399.5px;width:17px;height:9.5px;background:linear-gradient(#f0f0f0,#dadada);"></div>
<div style="left:627.5px;top:391.75px;width:0;height:0;border-left:3.0px solid transparent;border-right:3.0px solid transparent;border-bottom:3px solid #111;"></div>
<div style="left:627.5px;top:402.75px;width:0;height:0;border-left:3.0px solid transparent;border-right:3.0px solid transparent;border-top:3px solid #111;"></div>
<div class="t" style="left:554px;top:393px;font-size:12.4px;line-height:12.4px;color:#141414;font-weight:400;">0.0014</div>
<div class="t" style="left:369px;top:415px;font-size:12.4px;line-height:12.4px;color:#141414;font-weight:400;">IPR</div>
<div class="t" style="right:229px;top:415px;font-size:12.4px;line-height:12.4px;color:#141414;font-weight:400;">0.0054</div>
<div class="t" style="left:369px;top:432px;font-size:12.4px;line-height:12.4px;color:#141414;font-weight:400;">Adj. Chipload</div>
<div class="t" style="right:229px;top:432px;font-size:12.4px;line-height:12.4px;color:#141414;font-weight:400;">0.0014</div>
<div class="t" style="left:683px;top:357px;font-size:12.4px;line-height:12.4px;color:#141414;font-weight:400;">MRR (ci)</div>
<div class="t" style="right:20px;top:357px;font-size:12.4px;line-height:12.4px;color:#141414;font-weight:400;">6.441</div>
<div class="t" style="left:683px;top:375px;font-size:12.4px;line-height:12.4px;color:#141414;font-weight:400;">HP</div>
<div class="t" style="right:20px;top:375px;font-size:12.4px;line-height:12.4px;color:#141414;font-weight:400;">4.5087</div>
<div class="t" style="left:683px;top:393px;font-size:12.4px;line-height:12.4px;color:#cc2a30;font-weight:400;">Deflection</div>
<div class="t" style="right:20px;top:393px;font-size:12.4px;line-height:12.4px;color:#cc2a30;font-weight:400;">0.0019</div>
<div class="t" style="left:683px;top:411px;font-size:12.4px;line-height:12.4px;color:#141414;font-weight:400;">Torque</div>
<div class="t" style="right:20px;top:411px;font-size:12.4px;line-height:12.4px;color:#141414;font-weight:400;">1906.0272</div>
<div class="t" style="left:369px;top:472px;font-size:12.4px;line-height:12.4px;color:#141414;font-weight:400;">Mfg's</div>
<div class="t" style="left:409px;top:472px;font-size:12.4px;line-height:12.4px;color:#141414;font-weight:400;">Sfc Speed (SFM)</div>
<div style="left:523px;top:466px;width:90px;height:24px;box-sizing:border-box;border:1px solid #3a3a3a;background:#fff;"></div>
<div style="left:593px;top:467px;width:1px;height:22px;background:#555;"></div>
<div style="left:594px;top:467px;width:18px;height:11.0px;background:linear-gradient(#fafafa,#ececec);"></div>
<div style="left:594px;top:478.0px;width:18px;height:1px;background:#9a9a9a;"></div>
<div style="left:594px;top:479.0px;width:18px;height:10.0px;background:linear-gradient(#f0f0f0,#dadada);"></div>
<div style="left:600.0px;top:471.0px;width:0;height:0;border-left:3.0px solid transparent;border-right:3.0px solid transparent;border-bottom:3px solid #111;"></div>
<div style="left:600.0px;top:482.5px;width:0;height:0;border-left:3.0px solid transparent;border-right:3.0px solid transparent;border-top:3px solid #111;"></div>
<div class="t" style="left:527px;top:472px;font-size:12.4px;line-height:12.4px;color:#141414;font-weight:400;">498</div>
<div class="t" style="left:645px;top:472px;font-size:12.4px;line-height:12.4px;color:#141414;font-weight:400;">Chipload (IPT)</div>
<div style="left:759px;top:466px;width:90px;height:24px;box-sizing:border-box;border:1px solid #3a3a3a;background:#fff;"></div>
<div style="left:830px;top:467px;width:1px;height:22px;background:#555;"></div>
<div style="left:831px;top:467px;width:17px;height:11.0px;background:linear-gradient(#fafafa,#ececec);"></div>
<div style="left:831px;top:478.0px;width:17px;height:1px;background:#9a9a9a;"></div>
<div style="left:831px;top:479.0px;width:17px;height:10.0px;background:linear-gradient(#f0f0f0,#dadada);"></div>
<div style="left:836.5px;top:471.0px;width:0;height:0;border-left:3.0px solid transparent;border-right:3.0px solid transparent;border-bottom:3px solid #111;"></div>
<div style="left:836.5px;top:482.5px;width:0;height:0;border-left:3.0px solid transparent;border-right:3.0px solid transparent;border-top:3px solid #111;"></div>
<div class="t" style="left:763px;top:472px;font-size:12.4px;line-height:12.4px;color:#141414;font-weight:400;">0.0027</div>
<div class="t" style="left:199px;top:513px;font-size:12.4px;line-height:12.4px;color:#141414;font-weight:400;">Use HSM Feeds and Speeds</div>
<div style="left:365px;top:514px;width:13px;height:13px;box-sizing:border-box;border:1px solid #4a4a4a;background:linear-gradient(#d8d8d8,#f8f8f8);"></div>
<div class="t" style="left:395px;top:513px;font-size:12.4px;line-height:12.4px;color:#141414;font-weight:400;letter-spacing:-0.16px;">RPM Factor: 1.19&nbsp;&nbsp;Feedrate Factor: 1.22&nbsp;&nbsp;Eff. Diam.: 0.5</div>
<div class="t" style="left:168px;top:540px;font-size:12.4px;line-height:12.4px;color:#141414;font-weight:400;">Tool Engagement Angle (0-180)</div>
<div style="left:354px;top:535px;width:90px;height:23px;box-sizing:border-box;border:1px solid #3a3a3a;background:#fff;"></div>
<div style="left:426px;top:536px;width:1px;height:21px;background:#555;"></div>
<div style="left:427px;top:536px;width:16px;height:10.5px;background:linear-gradient(#fafafa,#ececec);"></div>
<div style="left:427px;top:546.5px;width:16px;height:1px;background:#9a9a9a;"></div>
<div style="left:427px;top:547.5px;width:16px;height:9.5px;background:linear-gradient(#f0f0f0,#dadada);"></div>
<div style="left:432.0px;top:539.75px;width:0;height:0;border-left:3.0px solid transparent;border-right:3.0px solid transparent;border-bottom:3px solid #111;"></div>
<div style="left:432.0px;top:550.75px;width:0;height:0;border-left:3.0px solid transparent;border-right:3.0px solid transparent;border-top:3px solid #111;"></div>
<div class="t" style="left:358px;top:541px;font-size:12.4px;line-height:12.4px;color:#141414;font-weight:400;">180</div>
<div style="left:450px;top:537px;width:81px;height:19px;box-sizing:border-box;border:1px solid #3c3c3c;border-radius:2px;background:linear-gradient(#fdfdfd,#f0f0f0 45%,#dcdcdc 100%);"></div>
<div class="t" style="left:290.5px;width:400px;text-align:center;top:541px;font-size:12.4px;line-height:12.4px;color:#141414;font-weight:400;">Const. TEA</div>
<div style="left:538px;top:537px;width:69px;height:19px;box-sizing:border-box;border:1px solid #3c3c3c;border-radius:2px;background:linear-gradient(#fdfdfd,#f0f0f0 45%,#dcdcdc 100%);"></div>
<div class="t" style="left:372.5px;width:400px;text-align:center;top:541px;font-size:12.4px;line-height:12.4px;color:#141414;font-weight:400;">Est. TEA</div>
<div class="t" style="left:613px;top:540px;font-size:12.4px;line-height:12.4px;color:#141414;font-weight:400;">Corner Adjust 100%</div>
<div class="t" style="left:143px;top:606px;font-size:12.4px;line-height:12.4px;color:#141414;font-weight:400;">Tips:&nbsp;&nbsp;Use Conventional Milling</div>
<div style="left:491px;top:579px;width:345px;height:68px;background:#000;border-radius:3px;"></div>
<div class="t" style="left:497px;top:600px;font-size:11px;line-height:11px;color:#f0f0f0;font-weight:400;letter-spacing:-0.3px;">Conservative</div>
<div class="t" style="left:778px;top:600px;font-size:11px;line-height:11px;color:#f0f0f0;font-weight:400;letter-spacing:-0.3px;">Aggressive</div>
<div class="t" style="left:463px;width:400px;text-align:center;top:629px;font-size:13px;line-height:13px;color:#f4f4f4;font-weight:400;">Rough</div>
<div style="left:618px;top:605px;width:93px;height:3px;background:linear-gradient(#e0e0e0,#b0b0b0);"></div>
<svg style="left:706px;top:600px" width="13" height="13" viewBox="0 0 13 13"><defs><radialGradient id="kn" cx="0.4" cy="0.35" r="0.65"><stop offset="0" stop-color="#fff"/><stop offset="1" stop-color="#b0b0b0"/></radialGradient></defs><circle cx="6.5" cy="6.5" r="4.8" fill="url(#kn)"/></svg>
<svg style="left:562px;top:592px" width="52" height="30" viewBox="0 0 52 30"><ellipse cx="8" cy="6.6" rx="6.3" ry="4.2" transform="rotate(18 8 6.6)" fill="#fff"/><path d="M14.2 9.6 L19.6 8.6 Q21 3.6 27 2.4 Q33 1.8 38 4.4 Q43.5 7.6 46 12.6 L48.8 15.4 L48 19.4 L40 19.6 L31 18.6 L22.2 17.2 L16 14.6 Z" fill="#fff"/><path d="M14 9.2 L21 8.6 L29.6 10 L38.6 11.4 L46.4 13.8 M28.6 1.5 L29.6 10 M38 3.5 L38.6 11.4 M21.4 8.6 L22.2 17.6 M30.4 10 L31 19 M39.6 11.4 L40 20" stroke="#000" stroke-width="1.3" fill="none"/><path d="M10.6 13.8 Q12.6 11.6 15 13.6 L22.6 24.4 Q23.6 27 21 27 Q17 26 12.6 20 Q10 16.5 10.6 13.8 Z" fill="#fff"/><path d="M42.4 21.6 Q46 20.4 49 21.8 Q50.6 24.5 49.6 27 Q47 28.6 44 27.6 Q42 25 42.4 21.6 Z" fill="#fff"/></svg>
<svg style="left:723px;top:589px" width="50" height="36" viewBox="0 0 50 36"><g fill="#fff"><ellipse cx="20" cy="22.5" rx="16.5" ry="11"/><circle cx="3.8" cy="25.5" r="3.2"/><path d="M8 28 Q12 35 20 34 L26 33 Q30 34.5 37 34 Q40 33 38 30 L33 28 Z"/><ellipse cx="40.5" cy="18.6" rx="7.6" ry="6.3" transform="rotate(22 40.5 18.6)"/><ellipse cx="33.2" cy="7" rx="2.6" ry="6.2" transform="rotate(-22 33.2 7)"/><ellipse cx="41.2" cy="6.6" rx="2.2" ry="6" transform="rotate(32 41.2 6.6)"/><path d="M30 12 L36 10 L40 14 L34 17 Z"/></g><circle cx="40.8" cy="17.4" r="0.9" fill="#000"/><path d="M32.6 16.4 Q34 22 38.6 25.6" stroke="#000" stroke-width="0.9" fill="none"/></svg>
<div style="left:128px;top:668px;width:140px;height:24px;box-sizing:border-box;border:1px solid #3c3c3c;border-radius:2px;background:linear-gradient(#fdfdfd,#f0f0f0 45%,#dcdcdc 100%);"></div>
<div class="t" style="left:-2.0px;width:400px;text-align:center;top:674px;font-size:12.4px;line-height:12.4px;color:#141414;font-weight:400;">Search Cut KB</div>
<div style="left:285px;top:668px;width:140px;height:24px;box-sizing:border-box;border:1px solid #3c3c3c;border-radius:2px;background:linear-gradient(#fdfdfd,#f0f0f0 45%,#dcdcdc 100%);"></div>
<div class="t" style="left:155.0px;width:400px;text-align:center;top:674px;font-size:12.4px;line-height:12.4px;color:#141414;font-weight:400;">Add to Cut KB</div>
<div style="left:624px;top:668px;width:140px;height:23px;box-sizing:border-box;border:1px solid #3c3c3c;border-radius:2px;background:linear-gradient(#fdfdfd,#f0f0f0 45%,#dcdcdc 100%);"></div>
<div class="t" style="left:494.0px;width:400px;text-align:center;top:674px;font-size:12.4px;line-height:12.4px;color:#141414;font-weight:400;">Reset to Defaults</div>
<div style="left:9px;top:704px;width:873px;height:24px;background:linear-gradient(#e8e8e8,#dcdcdc);"></div>
<div style="left:8px;top:703px;width:1px;height:26px;background:#3a3a3a;"></div>
<div style="left:882px;top:703px;width:1px;height:26px;background:#3a3a3a;"></div>
<div style="left:8px;top:728px;width:875px;height:1px;background:#3a3a3a;"></div>
<div style="left:1px;top:729px;width:889px;height:7px;background:linear-gradient(#e8eaeb,#e8eaeb 1px,#b9bcbe 1px,#a9acae 5px,#7a7c7e 5px,#7a7c7e 6px,#e4e6e7 6px);border-radius:0 0 5px 5px;"></div>
<div class="t" style="left:49px;top:711px;font-size:10px;line-height:10px;color:#444;font-weight:400;">Inches</div>
</body></html>
